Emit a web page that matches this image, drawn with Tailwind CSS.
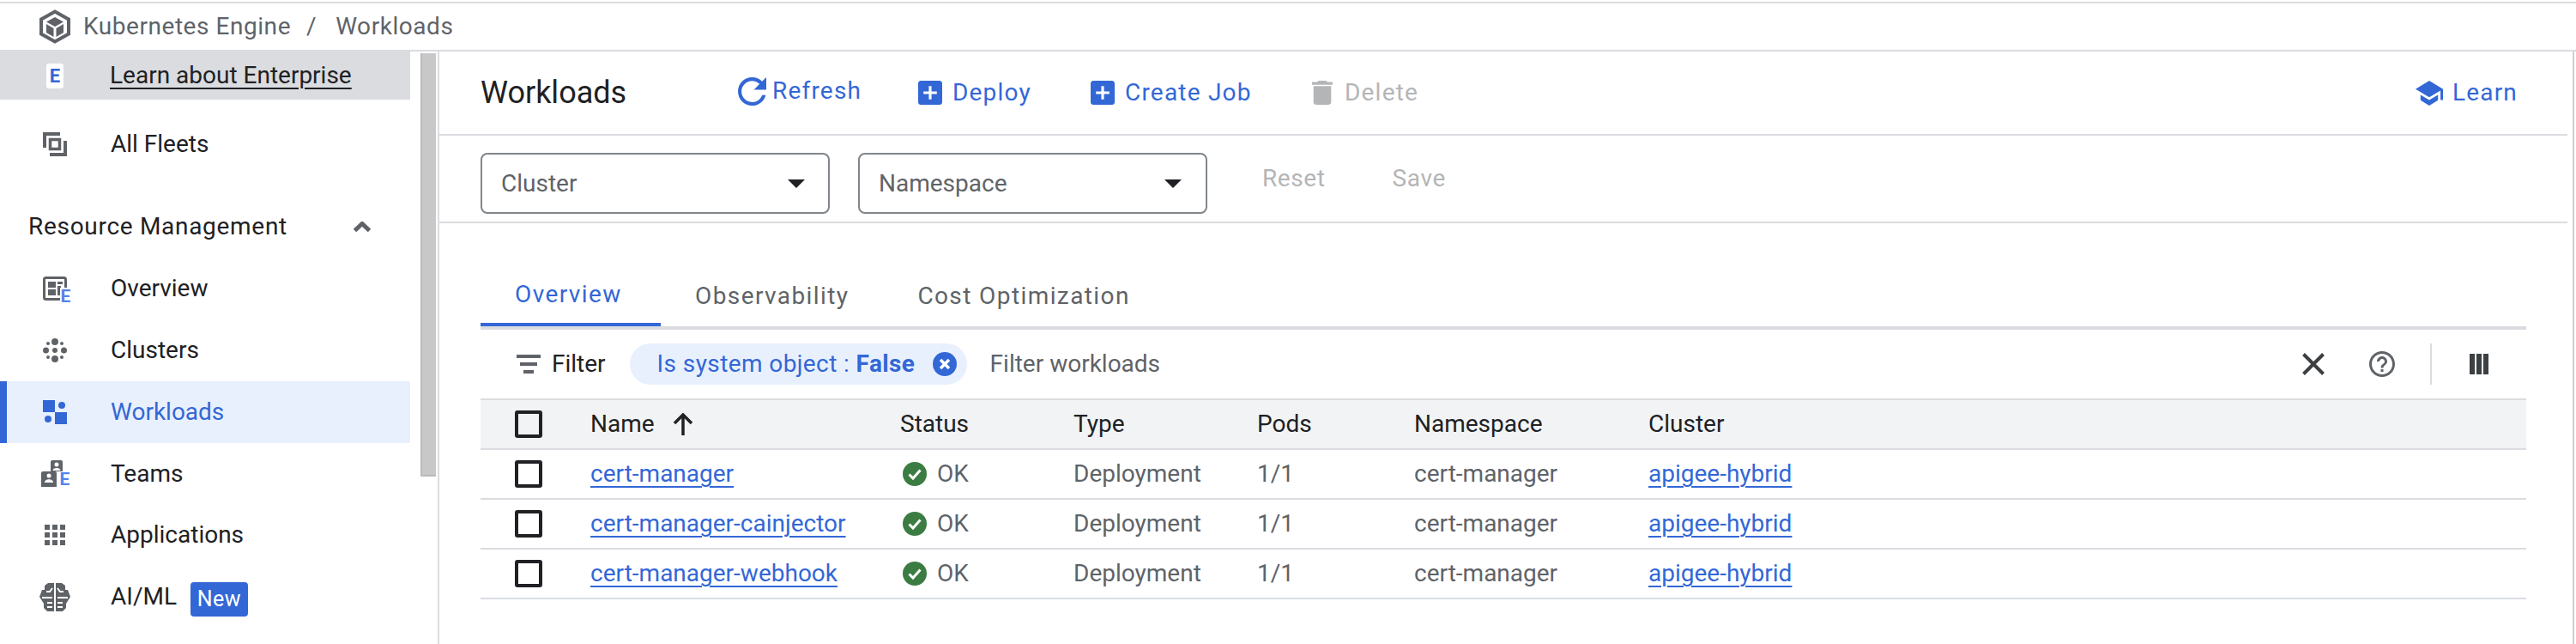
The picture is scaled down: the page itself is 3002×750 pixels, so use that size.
<!DOCTYPE html>
<html lang="en">
<head>
  <meta charset="UTF-8" />
  <title>Workloads - Kubernetes Engine</title>
  <script src="https://cdn.jsdelivr.net/npm/@tailwindcss/browser@4"></script>
</head>
<body class="bg-white">
  <div class="w-[3002px] h-[750px] overflow-hidden bg-white font-['Roboto',sans-serif] text-[28px] text-[#202124] flex flex-col pt-[2px]">
    <!-- breadcrumb -->
    <header class="h-[58px] shrink-0 border-t-2 border-b-2 border-[#dadce0] flex items-center pl-[46px] text-[#5f6368] tracking-[0.55px]">
      <svg class="w-[36px] h-[40px]" viewBox="0 0 36 40" fill="none">
        <path d="M18 2.5 L34 11.5 V28.5 L18 37.5 L2 28.5 V11.5 Z" stroke="#5f6368" stroke-width="4"/>
        <path d="M18 9 L28 14.5 L18 20 L8 14.5 Z" fill="#5f6368"/>
        <path d="M8 17 L16.5 22 V32 L8 27 Z" fill="#5f6368"/>
        <path d="M28 17 L19.5 22 V32 L28 27 Z" fill="#5f6368"/>
      </svg>
      <span class="ml-[15px]">Kubernetes Engine</span>
      <span class="ml-[18px]">/</span>
      <span class="ml-[22px]">Workloads</span>
    </header>

    <div class="flex flex-1 min-h-0">
      <!-- sidebar -->
      <aside class="w-[512px] shrink-0 border-r-2 border-[#dadce0] flex">
        <nav class="w-[478px] shrink-0">
          <div class="h-[56px] bg-[#dadce0] flex items-center pl-[54px]">
            <span class="w-[20px] h-[29px] bg-white rounded-[3px] flex items-center justify-center text-[#3367d6] text-[22px] font-bold">E</span>
            <span class="ml-[54px] -mt-[1px] underline decoration-2 underline-offset-[5px]">Learn about Enterprise</span>
          </div>

          <a class="mt-[16px] h-[72px] flex items-center pl-[50px]">
            <span class="w-[79px] flex">
              <svg class="w-[28px] h-[28px]" viewBox="0 0 28 28" fill="none" stroke="#5f6368">
                <path d="M2 18 V2 H20" stroke-width="4"/>
                <path d="M26 10 V26 H8" stroke-width="4"/>
                <rect x="8.5" y="8.5" width="11" height="11" stroke-width="3.5"/>
              </svg>
            </span>
            <span>All Fleets</span>
          </a>

          <div class="mt-[24px] h-[71px] flex items-center pl-[33px] pr-[46px] justify-between font-[450] tracking-[0.7px]">
            <span>Resource Management</span>
            <svg class="w-[20px] h-[12px]" viewBox="0 0 20 12" fill="none" stroke="#5f6368" stroke-width="5"><path d="M1.5 10.5 L10 2.5 L18.5 10.5"/></svg>
          </div>

          <a class="h-[72px] pt-[2px] flex items-center pl-[50px]">
            <span class="relative w-[79px] flex">
              <svg class="w-[28px] h-[28px]" viewBox="0 0 28 28" fill="none">
                <rect x="1.5" y="1.5" width="25" height="25" rx="2" stroke="#5f6368" stroke-width="3"/>
                <rect x="6" y="6" width="9" height="7" fill="#5f6368"/>
                <rect x="17" y="6" width="6" height="3" fill="#5f6368"/>
                <rect x="6" y="15" width="9" height="7" fill="#5f6368"/>
                <rect x="17" y="11" width="4" height="11" fill="#5f6368"/>
              </svg>
              <span class="absolute left-[20px] top-[13px] w-[13px] h-[20px] bg-white flex items-center justify-center text-[#5383ec] text-[21px] font-bold leading-none">E</span>
            </span>
            <span>Overview</span>
          </a>

          <a class="h-[73px] flex items-center pl-[50px]">
            <span class="w-[79px] flex">
              <svg class="w-[28px] h-[28px]" viewBox="0 0 28 28" fill="#5f6368">
                <circle cx="14" cy="4" r="4"/>
                <circle cx="6" cy="6" r="2"/>
                <circle cx="22" cy="6" r="2"/>
                <circle cx="3.5" cy="14" r="3.5"/>
                <circle cx="14" cy="14" r="3"/>
                <circle cx="24.5" cy="14" r="3.5"/>
                <circle cx="6" cy="22" r="2"/>
                <circle cx="22" cy="22" r="2"/>
                <circle cx="14" cy="24" r="4"/>
              </svg>
            </span>
            <span>Clusters</span>
          </a>

          <a class="h-[72px] flex items-center pl-[42px] border-l-8 border-[#3367d6] bg-[#e8f0fe] text-[#3367d6]">
            <span class="w-[79px] flex">
              <svg class="w-[28px] h-[28px]" viewBox="0 0 28 28" fill="#3367d6">
                <rect x="0" y="0" width="14" height="14"/>
                <circle cx="22" cy="6" r="4"/>
                <circle cx="6" cy="22" r="4"/>
                <rect x="14" y="14" width="14" height="14"/>
              </svg>
            </span>
            <span>Workloads</span>
          </a>

          <a class="h-[71px] flex items-center pl-[48px]">
            <span class="relative w-[81px] flex">
              <svg class="w-[32px] h-[32px]" viewBox="0 0 32 32" fill="#5f6368">
                <path d="M11 2 a2 2 0 0 1 2-2 h10 a2 2 0 0 1 2 2 V13 H11 Z"/>
                <path d="M0 15 a2 2 0 0 1 2-2 h14 a2 2 0 0 1 2 2 V31 H0 Z"/>
                <circle cx="18" cy="5" r="2.5" fill="#fff"/>
                <path d="M13.5 12 c0-4 9-4 9 0 Z" fill="#fff"/>
                <circle cx="9" cy="18" r="2.5" fill="#fff"/>
                <path d="M4 26 c0-5 10-5 10 0 Z" fill="#fff"/>
              </svg>
              <span class="absolute left-[21px] top-[13px] w-[13px] h-[20px] bg-white flex items-center justify-center text-[#5383ec] text-[21px] font-bold leading-none">E</span>
            </span>
            <span>Teams</span>
          </a>

          <a class="h-[72px] flex items-center pl-[52px]">
            <span class="w-[77px] flex">
              <span class="w-[24px] h-[24px] grid grid-cols-3 gap-[3px]">
                <i class="bg-[#5f6368]"></i><i class="bg-[#5f6368]"></i><i class="bg-[#5f6368]"></i>
                <i class="bg-[#5f6368]"></i><i class="bg-[#5f6368]"></i><i class="bg-[#5f6368]"></i>
                <i class="bg-[#5f6368]"></i><i class="bg-[#5f6368]"></i><i class="bg-[#5f6368]"></i>
              </span>
            </span>
            <span>Applications</span>
          </a>

          <a class="h-[72px] flex items-center pl-[46px]">
            <span class="w-[83px] flex">
              <svg class="w-[36px] h-[33px]" viewBox="0 0 36 33">
                <path d="M17 0 H10 L6 3 V8 H3 L0 16 L5 24 V29 L9 33 H17 Z" fill="#5f6368"/>
                <path d="M19 0 H26 L30 3 V8 H33 L36 16 L31 24 V29 L27 33 H19 Z" fill="#5f6368"/>
                <path d="M8 10 H12 L15 6 M3 17 H15 M9 23 H15 M9 28 H15" fill="none" stroke="#fff" stroke-width="2"/>
                <path d="M28 10 H24 L21 6 M33 17 H21 M27 23 H21 M27 28 H21" fill="none" stroke="#fff" stroke-width="2"/>
              </svg>
            </span>
            <span>AI/ML</span>
            <span class="ml-[16px] w-[67px] h-[40px] mt-[6px] rounded-[4px] bg-[#3367d6] text-white text-[25px] font-[450] flex items-center justify-center tracking-[0.5px]">New</span>
          </a>
        </nav>
        <div class="ml-[12px] mt-[2px] w-[18px] h-[493px] bg-[#c8c8c8] border-l-2 border-b-2 border-[#bbbbbb]"></div>
      </aside>

      <!-- main -->
      <main class="w-[2480px] shrink-0">
        <div class="h-[98px] border-b-2 border-[#dadce0] flex items-center pl-[48px] pr-[58px] font-[450] text-[#3367d6] tracking-[1.2px]">
          <h1 class="w-[300px] text-[36px] font-normal text-[#202124] tracking-normal">Workloads</h1>
          <button class="w-[210px] flex items-center gap-[7px] -mt-[4px]">
            <svg class="w-[33px] h-[33px]" viewBox="4 4 16 16" fill="#3367d6"><path d="M17.65 6.35C16.2 4.9 14.21 4 12 4c-4.42 0-7.99 3.58-7.99 8s3.57 8 7.99 8c3.73 0 6.84-2.55 7.73-6h-2.08c-.82 2.33-3.04 4-5.65 4-3.31 0-6-2.69-6-6s2.69-6 6-6c1.66 0 3.14.69 4.22 1.78L13 11h7V4l-2.35 2.35z"/></svg>
            Refresh
          </button>
          <button class="w-[201px] flex items-center gap-[12px]">
            <svg class="w-[28px] h-[28px]" viewBox="3 3 18 18" fill="#3367d6"><path d="M19 3H5c-1.11 0-2 .9-2 2v14c0 1.1.89 2 2 2h14c1.1 0 2-.9 2-2V5c0-1.1-.9-2-2-2zm-2 10h-4v4h-2v-4H7v-2h4V7h2v4h4v2z"/></svg>
            Deploy
          </button>
          <button class="w-[258px] flex items-center gap-[12px]">
            <svg class="w-[28px] h-[28px]" viewBox="3 3 18 18" fill="#3367d6"><path d="M19 3H5c-1.11 0-2 .9-2 2v14c0 1.1.89 2 2 2h14c1.1 0 2-.9 2-2V5c0-1.1-.9-2-2-2zm-2 10h-4v4h-2v-4H7v-2h4V7h2v4h4v2z"/></svg>
            Create Job
          </button>
          <button class="flex items-center gap-[14px] text-[#b4b5b7]">
            <svg class="w-[24px] h-[28px]" viewBox="5 3 14 18" preserveAspectRatio="none" fill="#b4b5b7"><path d="M6 19c0 1.1.9 2 2 2h8c1.1 0 2-.9 2-2V7H6v12zM19 4h-3.5l-1-1h-5l-1 1H5v2h14V4z"/></svg>
            Delete
          </button>
          <a class="ml-auto flex items-center gap-[11px]">
            <svg class="w-[32px] h-[29px]" viewBox="1 3 22 18" preserveAspectRatio="none" fill="#3367d6"><path d="M5 13.18v4L12 21l7-3.82v-4L12 17l-7-3.82zM12 3L1 9l11 6 9-4.91V17h2V9L12 3z"/></svg>
            Learn
          </a>
        </div>

        <div class="h-[102px] border-b-2 border-[#dadce0] flex items-start pt-[20px] pl-[48px]">
          <div class="w-[407px] h-[71px] border-2 border-[#80868b] rounded-[8px] flex items-center justify-between pl-[22px] pr-[27px] text-[#5f6368]">
            Cluster
            <span class="w-0 h-0 border-x-[10px] border-x-transparent border-t-[10px] border-t-[#202124]"></span>
          </div>
          <div class="ml-[33px] w-[407px] h-[71px] border-2 border-[#80868b] rounded-[8px] flex items-center justify-between pl-[22px] pr-[28px] text-[#5f6368]">
            Namespace
            <span class="w-0 h-0 border-x-[10px] border-x-transparent border-t-[10px] border-t-[#202124]"></span>
          </div>
          <span class="ml-[64px] h-[60px] flex items-center font-[450] text-[#b4b5b7] tracking-[0.6px]">Reset</span>
          <span class="ml-[78px] h-[60px] flex items-center font-[450] text-[#b4b5b7] tracking-[0.6px]">Save</span>
        </div>

        <section class="px-[48px] pt-[46px]">
          <!-- tabs -->
          <div class="flex border-b-4 border-[#dadce0] h-[78px] text-[#5f6368] font-[450] tracking-[1.4px]">
            <a class="h-[74px] w-[210px] pl-[40px] pt-[4px] flex items-center border-b-4 border-[#3367d6] text-[#3367d6]">Overview</a>
            <a class="h-[74px] px-[40px] pt-[4px] flex items-center">Observability</a>
            <a class="h-[74px] px-[40px] pt-[4px] flex items-center">Cost Optimization</a>
          </div>

          <!-- filter bar -->
          <div class="h-[80px] flex items-center">
            <span class="ml-[42px] w-[28px] flex flex-col items-center gap-[5px]">
              <i class="block w-[28px] h-[4px] bg-[#5f6368]"></i>
              <i class="block w-[20px] h-[4px] bg-[#5f6368]"></i>
              <i class="block w-[12px] h-[4px] bg-[#5f6368]"></i>
            </span>
            <span class="ml-[13px] font-[450]">Filter</span>
            <span class="ml-[28px] w-[393px] h-[48px] rounded-full bg-[#e8f0fe] text-[#3367d6] flex items-center pl-[32px] tracking-[0.4px]">
              <span>Is system object : <b class="font-bold">False</b></span>
              <svg class="ml-auto mr-[12px] w-[28px] h-[28px]" viewBox="0 0 28 28">
                <circle cx="14" cy="14" r="14" fill="#3367d6"/>
                <path d="M9 9 L19 19 M19 9 L9 19" stroke="#fff" stroke-width="3.5"/>
              </svg>
            </span>
            <span class="ml-[27px] text-[#5f6368]">Filter workloads</span>
            <span class="ml-auto flex items-center pr-[44px]">
              <svg class="w-[26px] h-[26px]" viewBox="0 0 26 26" stroke="#3c4043" stroke-width="4"><path d="M1.5 1.5 L24.5 24.5 M24.5 1.5 L1.5 24.5"/></svg>
              <svg class="ml-[52px] w-[30px] h-[30px]" viewBox="2 2 20 20" fill="#5f6368"><path d="M11 18h2v-2h-2v2zm1-16C6.48 2 2 6.48 2 12s4.48 10 10 10 10-4.48 10-10S17.52 2 12 2zm0 18c-4.41 0-8-3.59-8-8s3.59-8 8-8 8 3.59 8 8-3.59 8-8 8zm0-14c-2.21 0-4 1.79-4 4h2c0-1.1.9-2 2-2s2 .9 2 2c0 2-3 1.75-3 5h2c0-2.25 3-2.5 3-5 0-2.21-1.79-4-4-4z"/></svg>
              <i class="ml-[41px] block w-[2px] h-[48px] bg-[#dadce0]"></i>
              <span class="ml-[44px] flex gap-[2px]">
                <i class="block w-[6px] h-[24px] bg-[#3c4043]"></i>
                <i class="block w-[6px] h-[24px] bg-[#3c4043]"></i>
                <i class="block w-[6px] h-[24px] bg-[#3c4043]"></i>
              </span>
            </span>
          </div>

          <!-- table -->
          <div class="h-[60px] border-y-2 border-[#dadce0] bg-[#f1f3f4] grid grid-cols-[128px_361px_202px_214px_183px_273px_1fr] items-center font-[450]">
            <span class="pl-[40px]"><i class="block w-[32px] h-[32px] border-4 border-[#202124] rounded-[3px]"></i></span>
            <span class="flex items-center gap-[21px]">
              Name
              <svg class="w-[24px] h-[26px]" viewBox="0 0 24 26" fill="none" stroke="#202124" stroke-width="3.5"><path d="M12 26 V3 M2 12 L12 2 L22 12"/></svg>
            </span>
            <span>Status</span>
            <span>Type</span>
            <span>Pods</span>
            <span>Namespace</span>
            <span>Cluster</span>
          </div>

          <div class="h-[58px] border-b-2 border-[#dadce0] grid grid-cols-[128px_361px_202px_214px_183px_273px_1fr] items-center text-[#5f6368]">
            <span class="pl-[40px]"><i class="block w-[32px] h-[32px] border-4 border-[#202124] rounded-[3px]"></i></span>
            <a class="text-[#3367d6] underline decoration-2 underline-offset-[5px]">cert-manager</a>
            <span class="flex items-center gap-[12px] pl-[3px]">
              <svg class="w-[28px] h-[28px]" viewBox="0 0 28 28"><circle cx="14" cy="14" r="14" fill="#3b7c42"/><path d="M7.5 14.5 L12 19 L20.5 9.5" fill="none" stroke="#fff" stroke-width="3"/></svg>
              OK
            </span>
            <span>Deployment</span>
            <span>1/1</span>
            <span>cert-manager</span>
            <a class="text-[#3367d6] underline decoration-2 underline-offset-[5px]">apigee-hybrid</a>
          </div>

          <div class="h-[58px] border-b-2 border-[#dadce0] grid grid-cols-[128px_361px_202px_214px_183px_273px_1fr] items-center text-[#5f6368]">
            <span class="pl-[40px]"><i class="block w-[32px] h-[32px] border-4 border-[#202124] rounded-[3px]"></i></span>
            <a class="text-[#3367d6] underline decoration-2 underline-offset-[5px]">cert-manager-cainjector</a>
            <span class="flex items-center gap-[12px] pl-[3px]">
              <svg class="w-[28px] h-[28px]" viewBox="0 0 28 28"><circle cx="14" cy="14" r="14" fill="#3b7c42"/><path d="M7.5 14.5 L12 19 L20.5 9.5" fill="none" stroke="#fff" stroke-width="3"/></svg>
              OK
            </span>
            <span>Deployment</span>
            <span>1/1</span>
            <span>cert-manager</span>
            <a class="text-[#3367d6] underline decoration-2 underline-offset-[5px]">apigee-hybrid</a>
          </div>

          <div class="h-[58px] border-b-2 border-[#dadce0] grid grid-cols-[128px_361px_202px_214px_183px_273px_1fr] items-center text-[#5f6368]">
            <span class="pl-[40px]"><i class="block w-[32px] h-[32px] border-4 border-[#202124] rounded-[3px]"></i></span>
            <a class="text-[#3367d6] underline decoration-2 underline-offset-[5px]">cert-manager-webhook</a>
            <span class="flex items-center gap-[12px] pl-[3px]">
              <svg class="w-[28px] h-[28px]" viewBox="0 0 28 28"><circle cx="14" cy="14" r="14" fill="#3b7c42"/><path d="M7.5 14.5 L12 19 L20.5 9.5" fill="none" stroke="#fff" stroke-width="3"/></svg>
              OK
            </span>
            <span>Deployment</span>
            <span>1/1</span>
            <span>cert-manager</span>
            <a class="text-[#3367d6] underline decoration-2 underline-offset-[5px]">apigee-hybrid</a>
          </div>
        </section>
      </main>
      <div class="ml-[6px] w-[2px] bg-[#cfcfcf]"></div>
    </div>
  </div>
</body>
</html>
